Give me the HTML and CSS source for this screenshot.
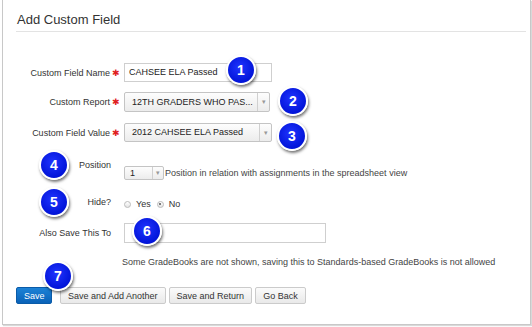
FILE: index.html
```html
<!DOCTYPE html>
<html lang="en">
<head>
  <meta charset="UTF-8" />
  <title>Add Custom Field</title>
  <link rel="stylesheet" href="styles.css">
</head>
<body>
  <div class="panel">
    <h2 class="panel-title">Add Custom Field</h2>
    <form class="field-form">
      <div class="row row-name">
        <label class="lbl">Custom Field Name<span class="req">&#10033;</span></label>
        <div class="text-input name-input">CAHSEE ELA Passed</div>
      </div>
      <div class="row row-report">
        <label class="lbl">Custom Report<span class="req">&#10033;</span></label>
        <div class="select report-select"><span class="sel-text">12TH GRADERS WHO PAS...</span><span class="sel-arrow">&#9662;</span></div>
      </div>
      <div class="row row-value">
        <label class="lbl">Custom Field Value<span class="req">&#10033;</span></label>
        <div class="select value-select"><span class="sel-text">2012 CAHSEE ELA Passed</span><span class="sel-arrow">&#9662;</span></div>
      </div>
      <div class="row row-position">
        <label class="lbl">Position</label>
        <div class="position-wrap">
          <div class="select pos-select"><span class="sel-text">1</span><span class="sel-arrow">&#9662;</span></div>
          <span class="hint">Position in relation with assignments in the spreadsheet view</span>
        </div>
      </div>
      <div class="row row-hide">
        <label class="lbl">Hide?</label>
        <div class="radios">
          <span class="radio"></span><span class="radio-text">Yes</span>
          <span class="radio checked"></span><span class="radio-text">No</span>
        </div>
      </div>
      <div class="row row-save-to">
        <label class="lbl">Also Save This To</label>
        <div class="text-input save-to-input"></div>
      </div>
      <p class="note">Some GradeBooks are not shown, saving this to Standards-based GradeBooks is not allowed</p>
      <div class="actions">
        <button type="button" class="btn btn-primary">Save</button>
        <button type="button" class="btn">Save and Add Another</button>
        <button type="button" class="btn">Save and Return</button>
        <button type="button" class="btn">Go Back</button>
      </div>
    </form>
  </div>

  <!-- numbered callouts -->
  <span class="badge b1">1</span>
  <span class="badge b2">2</span>
  <span class="badge b3">3</span>
  <span class="badge b4">4</span>
  <span class="badge b5">5</span>
  <span class="badge b6">6</span>
  <span class="badge b7">7</span>
</body>
</html>
```

FILE: styles.css
```css
*, *::before, *::after {
  box-sizing: border-box;
}
body {
  margin: 0;
  background: #fff;
  font-family: "Liberation Sans", Arial, sans-serif;
  font-size: 9px;
  color: #333;
  width: 532px;
  height: 327px;
  overflow: hidden;
}
/* Painel */
.panel {
  margin-left: 2px;
  width: 529px;
  height: 325px;
  border: 1px solid #c8c8c8;
  border-top: none;
  box-shadow: 1px 1px 1px rgba(0,0,0,0.15);
  padding: 9px 4px 0 13px;
}
.panel-title {
  margin: 0;
  font-size: 13px;
  font-weight: normal;
  color: #333;
  line-height: 16px;
  padding: 3px 0 3px 1px;
  border-bottom: 1px solid #e3e3e3;
}
.field-form {
  margin-top: 31px;
}
.row {
  display: grid;
  grid-template-columns: 104px 1fr;
  column-gap: 4px;
  align-items: center;
}
.lbl {
  text-align: right;
  padding-right: 9px;
  color: #333;
  white-space: nowrap;
}
.req {
  color: #e02020;
  font-size: 9px;
  margin-left: 2px;
  margin-right: -9px;
}
.row-report { margin-top: 10px; }
.row-value { margin-top: 11px; }
.row-position { margin-top: 15px; align-items: start; }
.row-position .lbl { padding-top: 3px; }
.row-hide { margin-top: 15px; }
.row-save-to { margin-top: 14px; }

.text-input {
  border: 1px solid #cfcfcf;
  background: #fff;
  height: 19px;
  line-height: 17px;
  padding-left: 4px;
  color: #222;
}
.name-input { width: 148px; }
.save-to-input { width: 202px; height: 20px; }

.select {
  display: flex;
  align-items: stretch;
  border: 1px solid #c4c4c4;
  border-radius: 2px;
  background: linear-gradient(#fdfdfd, #ececec);
  height: 20px;
  color: #222;
}
.sel-text {
  flex: 1;
  padding-left: 7px;
  line-height: 18px;
  white-space: nowrap;
  overflow: hidden;
}
.sel-arrow {
  width: 12px;
  border-left: 1px solid #d0d0d0;
  color: #999;
  font-size: 7px;
  text-align: center;
  line-height: 18px;
}
.report-select { width: 146px; }
.value-select { width: 148px; height: 19px; }
.value-select .sel-text,
.value-select .sel-arrow { line-height: 17px; }

.position-wrap {
  display: flex;
  align-items: center;
  margin-top: 9px;
}
.pos-select {
  width: 40px;
  height: 14px;
}
.pos-select .sel-text { line-height: 13px; padding-left: 5px; }
.pos-select .sel-arrow { line-height: 12px; width: 11px; }
.hint {
  margin-left: 1px;
  color: #444;
}

.radios {
  display: flex;
  align-items: center;
  padding-top: 4px;
}
.radio {
  width: 7px;
  height: 7px;
  border-radius: 50%;
  border: 1px solid #bbb;
  background: linear-gradient(#fff, #e4e4e4);
  position: relative;
}
.radio.checked::after {
  content: "";
  position: absolute;
  left: 1.5px;
  top: 1.5px;
  width: 2px;
  height: 2px;
  border-radius: 50%;
  background: #555;
}
.radio-text {
  margin: 0 6px 0 5px;
}

.note {
  margin: 13px 0 0 106px;
  color: #444;
  line-height: 12px;
}

.actions {
  margin-top: 19px;
  display: flex;
  gap: 3px;
}
.btn {
  font-family: inherit;
  font-size: 9px;
  height: 17px;
  padding: 0 7px;
  border: 1px solid #cbcbcb;
  border-radius: 2px;
  background: linear-gradient(#fbfbfb, #e9e9e9);
  color: #333;
}
.btn-primary {
  width: 36px;
  margin-right: 5px;
  background: linear-gradient(#1c82d6, #0a62b8);
  border-color: #0a5ba8;
  color: #fff;
}

/* Marcadores numerados */
.badge {
  position: absolute;
  width: 30px;
  height: 30px;
  border-radius: 50%;
  border: 2px solid #fff;
  background: radial-gradient(circle at 45% 40%, #1f34ff, #0012d6 75%);
  box-shadow: 1px 2px 3px rgba(0,0,0,0.55);
  color: #fff;
  font-family: "Liberation Sans", Arial, sans-serif;
  font-weight: bold;
  font-size: 14px;
  line-height: 26px;
  text-align: center;
}
.b1 { left: 226px; top: 55px; }
.b2 { left: 278px; top: 86px; }
.b3 { left: 277px; top: 121px; }
.b4 { left: 39px; top: 150px; }
.b5 { left: 39px; top: 187px; }
.b6 { left: 132px; top: 216px; }
.b7 { left: 43px; top: 261px; }
```
